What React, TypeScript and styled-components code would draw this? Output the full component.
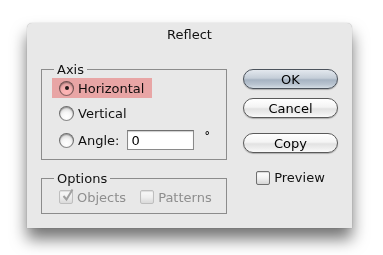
import React from "react";
import styled, { createGlobalStyle } from "styled-components";

const Global = createGlobalStyle`
  html, body { margin: 0; padding: 0; background: #ffffff; }
  body { font-family: "DejaVu Sans", "Liberation Sans", sans-serif; }
  * { box-sizing: border-box; }
`;

const Stage = styled.div`
  width: 383px;
  height: 255px;
  padding: 23px 0 0 27px;
  background: #ffffff;
`;

const Dialog = styled.div`
  width: 325px;
  height: 205px;
  background: #e8e8e8;
  border-radius: 5px 5px 0 0;
  box-shadow: 0 11px 16px rgba(0, 0, 0, 0.55), 0 0 1px rgba(0, 0, 0, 0.35);
  display: flex;
  flex-direction: column;
`;

const Title = styled.div`
  height: 23px;
  display: flex;
  align-items: center;
  justify-content: center;
  font-size: 13px;
  color: #111;
`;

const Body = styled.div`
  display: flex;
  padding: 23px 0 0 14px;
  gap: 16px;
`;

const LeftCol = styled.div`
  display: flex;
  flex-direction: column;
  gap: 18px;
  width: 186px;
`;

const Group = styled.div<{ $h: number }>`
  height: ${(p) => p.$h}px;
  border: 1px solid #8c8c8c;
  padding: 0 0 0 10px;
  display: flex;
  flex-direction: column;
  align-items: flex-start;
`;

const Legend = styled.div`
  font-size: 13px;
  line-height: 15px;
  color: #111;
  padding: 0 3px;
  margin: -8px 0 0 2px;
  background: #e8e8e8;
`;

const RadioRow = styled.div<{ $hl?: boolean; $mt: number }>`
  position: relative;
  display: flex;
  align-items: center;
  gap: 4px;
  height: 20px;
  margin-top: ${(p) => p.$mt}px;
  width: ${(p) => (p.$hl ? "100px" : "auto")};
  padding-left: 7px;
  font-size: 13px;
  color: #111;
  &::after {
    content: "";
    display: ${(p) => (p.$hl ? "block" : "none")};
    position: absolute;
    inset: 0;
    background: #ffb6b6;
    mix-blend-mode: multiply;
    pointer-events: none;
  }
`;

const Radio = styled.span<{ $on?: boolean }>`
  flex: none;
  width: 15px;
  height: 15px;
  border-radius: 50%;
  border: 1px solid #6e6e6e;
  border-bottom-color: #8a8a8a;
  background: radial-gradient(circle at 50% 75%, #ffffff 0%, #f6f6f6 40%, #c4c4c4 100%);
  box-shadow: inset 0 1px 1px rgba(0, 0, 0, 0.3);
  display: flex;
  align-items: center;
  justify-content: center;
  &::before {
    content: "";
    width: 4px;
    height: 4px;
    border-radius: 50%;
    background: #222;
    display: ${(p) => (p.$on ? "block" : "none")};
  }
`;

const Input = styled.input`
  width: 67px;
  height: 20px;
  margin-left: 4px;
  border: 1px solid #8a8a8a;
  border-top-color: #6f6f6f;
  box-shadow: inset 0 1px 1px rgba(0, 0, 0, 0.2);
  font-family: inherit;
  font-size: 13px;
  padding: 1px 3px 0;
  color: #000;
  background: #fff;
  outline: none;
`;

const Degree = styled.span`
  margin-left: 6px;
  font-size: 11px;
  font-weight: bold;
  align-self: flex-start;
  margin-top: -1px;
`;

const CheckRow = styled.div`
  display: flex;
  align-items: center;
  gap: 14px;
  height: 20px;
  margin-top: 1px;
  padding-left: 7px;
`;

const CheckLabel = styled.label<{ $dim?: boolean }>`
  display: flex;
  align-items: center;
  gap: 4px;
  font-size: 13px;
  color: ${(p) => (p.$dim ? "#8e8e8e" : "#111")};
`;

const Box = styled.span<{ $dim?: boolean }>`
  position: relative;
  flex: none;
  width: 14px;
  height: 14px;
  border-radius: 2px;
  border: 1px solid ${(p) => (p.$dim ? "#b0b0b0" : "#707070")};
  background: linear-gradient(#ffffff, #f2f2f2 50%, #d6d6d6);
  box-shadow: inset 0 1px 1px rgba(0, 0, 0, 0.15);
  opacity: ${(p) => (p.$dim ? 0.75 : 1)};
`;

const Tick = styled.svg`
  position: absolute;
  left: 1px;
  top: -3px;
`;

const RightCol = styled.div`
  display: flex;
  flex-direction: column;
  align-items: center;
  width: 95px;
`;

const Button = styled.div<{ $def?: boolean; $mt: number }>`
  width: 95px;
  height: 20px;
  margin-top: ${(p) => p.$mt}px;
  border-radius: 10px;
  border: 1px solid ${(p) => (p.$def ? "#4c535c" : "#5a5a5a")};
  background: ${(p) =>
    p.$def
      ? "linear-gradient(#e3e8ee 0%, #c5ced8 45%, #a6b3c2 55%, #b9c4d0 80%, #d4dce4 100%)"
      : "linear-gradient(#ffffff 0%, #f4f4f4 45%, #e2e2e2 55%, #eeeeee 80%, #fafafa 100%)"};
  box-shadow: 0 1px 1px rgba(0, 0, 0, 0.25);
  display: flex;
  align-items: center;
  justify-content: center;
  font-size: 13px;
  color: #000;
`;

const PreviewRow = styled(CheckLabel)`
  margin-top: 17px;
`;

export default function App() {
  return (
    <>
      <Global />
      <Stage>
        <Dialog>
          <Title>Reflect</Title>
          <Body>
            <LeftCol>
              <Group $h={91}>
                <Legend>Axis</Legend>
                <RadioRow $hl $mt={1}>
                  <Radio $on />
                  <span>Horizontal</span>
                </RadioRow>
                <RadioRow $mt={5}>
                  <Radio />
                  <span>Vertical</span>
                </RadioRow>
                <RadioRow $mt={7}>
                  <Radio />
                  <span>Angle:</span>
                  <Input defaultValue="0" readOnly />
                  <Degree>°</Degree>
                </RadioRow>
              </Group>
              <Group $h={36}>
                <Legend>Options</Legend>
                <CheckRow>
                  <CheckLabel $dim>
                    <Box $dim>
                      <Tick width="14" height="14" viewBox="0 0 14 14">
                        <path d="M2.5 8 L5.5 11.5 L11.5 1.5" fill="none" stroke="#8a8a8a" strokeWidth="2" />
                      </Tick>
                    </Box>
                    Objects
                  </CheckLabel>
                  <CheckLabel $dim>
                    <Box $dim />
                    Patterns
                  </CheckLabel>
                </CheckRow>
              </Group>
            </LeftCol>
            <RightCol>
              <Button $def $mt={0}>OK</Button>
              <Button $mt={9}>Cancel</Button>
              <Button $mt={15}>Copy</Button>
              <PreviewRow>
                <Box />
                Preview
              </PreviewRow>
            </RightCol>
          </Body>
        </Dialog>
      </Stage>
    </>
  );
}
